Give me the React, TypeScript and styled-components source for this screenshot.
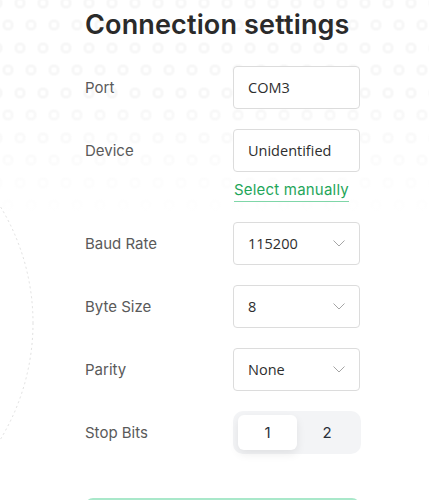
import React, { FC, useState } from "react";
import styled, { createGlobalStyle } from "styled-components";

const GlobalStyle = createGlobalStyle`
  html, body {
    margin: 0;
    padding: 0;
    background: #fff;
  }
  * {
    box-sizing: border-box;
  }
`;

const ring = "radial-gradient(circle, transparent 2.5px, #f7f7f7 3px, #f7f7f7 5.5px, transparent 6px)";

type Field = { label: string; value: string };

const fields: Field[] = [
  { label: "Baud Rate", value: "115200" },
  { label: "Byte Size", value: "8" },
  { label: "Parity", value: "None" },
];

const Chevron: FC = () => (
  <svg width="12" height="7" viewBox="0 0 12 7" fill="none">
    <polyline points="0.5,0.5 6,6 11.5,0.5" stroke="#a5a5a5" strokeWidth="1" />
  </svg>
);

const App: FC = () => {
  const [stopBits, setStopBits] = useState(1);

  return (
    <StyledPage>
      <GlobalStyle />
      <StyledArc width="40" height="500" viewBox="0 0 40 500">
        <circle cx="-191" cy="323" r="224" fill="none" stroke="#e0e0e0" strokeWidth="1" strokeDasharray="2 3" />
      </StyledArc>
      <StyledContent>
        <StyledTitle>Connection settings</StyledTitle>
        <StyledForm>
          <StyledRow>
            <StyledLabel>Port</StyledLabel>
            <StyledBox>COM3</StyledBox>
          </StyledRow>
          <StyledRow>
            <StyledLabel>Device</StyledLabel>
            <StyledField>
              <StyledBox>Unidentified</StyledBox>
              <StyledLink>Select manually</StyledLink>
            </StyledField>
          </StyledRow>
          {fields.map((f) => (
            <StyledRow key={f.label}>
              <StyledLabel>{f.label}</StyledLabel>
              <StyledBox>
                {f.value}
                <Chevron />
              </StyledBox>
            </StyledRow>
          ))}
          <StyledRow>
            <StyledLabel>Stop Bits</StyledLabel>
            <StyledToggle>
              {[1, 2].map((n) => (
                <StyledSegment key={n} active={stopBits === n} onClick={() => setStopBits(n)}>
                  {n}
                </StyledSegment>
              ))}
            </StyledToggle>
          </StyledRow>
        </StyledForm>
        <StyledButton />
      </StyledContent>
    </StyledPage>
  );
};

const StyledPage = styled.div`
  position: relative;
  width: 429px;
  height: 500px;
  overflow: hidden;
  font-family: Inter, "Liberation Sans", sans-serif;
  background:
    linear-gradient(rgba(255, 255, 255, 0) 0, rgba(255, 255, 255, 0) 90px, #fff 215px),
    ${ring} -3.5px 2.5px / 23px 45px,
    ${ring} 8.5px 25.5px / 23px 45px,
    #fff;
`;

const StyledArc = styled.svg`
  position: absolute;
  left: 0;
  top: 0;
`;

const StyledContent = styled.div`
  position: relative;
  width: 275px;
  margin-left: 85px;
  padding-top: 9px;
`;

const StyledTitle = styled.h1`
  margin: 0;
  font-size: 27px;
  line-height: 32px;
  font-weight: 600;
  color: #2a2a2a;
  letter-spacing: 0.15px;
  white-space: nowrap;
`;

const StyledForm = styled.div`
  margin-top: 25px;
  display: flex;
  flex-direction: column;
  gap: 20px;
`;

const StyledRow = styled.div`
  display: grid;
  grid-template-columns: 148px 127px;
  align-items: start;
`;

const StyledLabel = styled.div`
  height: 43px;
  display: flex;
  align-items: center;
  font-size: 15px;
  color: #5a5a5a;
`;

const StyledField = styled.div`
  display: flex;
  flex-direction: column;
  align-items: flex-start;
`;

const StyledBox = styled.div`
  width: 127px;
  height: 43px;
  display: flex;
  align-items: center;
  justify-content: space-between;
  padding: 0 14px;
  background: #fff;
  border: 1px solid #dcdcdc;
  border-radius: 4px;
  font-family: "Open Sans", "Noto Sans", sans-serif;
  font-size: 14.5px;
  color: #2e2e2e;
`;

const StyledLink = styled.span`
  margin-top: 8px;
  margin-left: 1px;
  padding-bottom: 1px;
  font-size: 15px;
  line-height: 20px;
  color: #1fa65a;
  letter-spacing: 0.2px;
  border-bottom: 1px solid #7fd6a8;
  cursor: pointer;
`;

const StyledToggle = styled.div`
  width: 128px;
  height: 43px;
  display: grid;
  grid-template-columns: 59px 1fr;
  padding: 4px 4px 4px 5px;
  background: #f3f4f6;
  border-radius: 10px;
`;

const StyledSegment = styled.button<{ active: boolean }>`
  border: none;
  border-radius: 6px;
  font-family: Inter, "Liberation Sans", sans-serif;
  font-size: 15px;
  color: #2a2f3a;
  background: ${({ active }) => (active ? "#fff" : "transparent")};
  box-shadow: ${({ active }) => (active ? "0 4px 10px rgba(0, 0, 0, 0.08)" : "none")};
  cursor: pointer;
`;

const StyledButton = styled.button`
  display: block;
  width: 275px;
  height: 48px;
  margin-top: 44px;
  border: none;
  border-radius: 8px;
  background: #a9e8ca;
`;

export default App;
